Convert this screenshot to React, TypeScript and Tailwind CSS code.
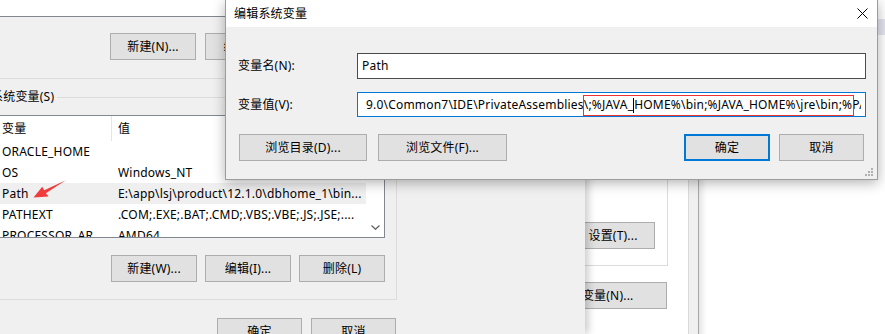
import React from 'react';

type BtnProps = { children: React.ReactNode; className?: string; primary?: boolean };

function Btn({ children, className = '', primary = false }: BtnProps) {
  return (
    <div
      className={`flex h-[27px] shrink-0 items-center justify-center bg-[#e1e1e1] text-[12px] text-black ${
        primary ? 'border-2 border-[#0078d7]' : 'border border-[#adadad]'
      } ${className}`}
    >
      {children}
    </div>
  );
}

const ROWS = [
  { name: 'ORACLE_HOME', value: '' },
  { name: 'OS', value: 'Windows_NT' },
  { name: 'Path', value: 'E:\\app\\lsj\\product\\12.1.0\\dbhome_1\\bin...', active: true },
  { name: 'PATHEXT', value: '.COM;.EXE;.BAT;.CMD;.VBS;.VBE;.JS;.JSE;....' },
  { name: 'PROCESSOR_AR...', value: 'AMD64' },
];

const VALUE = '9.0\\Common7\\IDE\\PrivateAssemblies\\;%JAVA_';
const VALUE_REST = 'HOME%\\bin;%JAVA_HOME%\\jre\\bin;%PATH%;C:\\Windows';

export default function App() {
  return (
    <div className="relative h-[334px] w-[885px] overflow-hidden bg-white font-['Noto_Sans','Noto_Sans_CJK_SC',sans-serif] text-[12px] tracking-[0.2px] text-black">
      {/* background window piece */}
      <div className="absolute right-0 top-[19px] h-[16px] w-[8px] bg-[#e4e4f0]" />

      {/* System properties window (behind) */}
      <div className="absolute left-[400px] top-[150px] flex h-[200px] w-[299px] border-r border-[#a8a8a8] bg-[#f0f0f0] pr-[9px] shadow-[3px_0_6px_rgba(0,0,0,0.12)]">
        <div className="flex flex-1 flex-col items-end border-r border-[#d9d9d9] bg-white pr-[20px]">
          <div className="flex h-[116px] w-[220px] items-end justify-end border-b border-r border-[#dcdcdc] pb-[16px] pr-[12px]">
            <Btn className="w-[84px]">设置(T)...</Btn>
          </div>
          <Btn className="mr-px mt-[16px] w-[143px]">环境变量(N)...</Btn>
        </div>
      </div>

      {/* Environment variables window */}
      <div className="absolute left-0 top-0 z-10 h-[334px] w-[585px] bg-[#f0f0f0] shadow-[3px_0_8px_rgba(0,0,0,0.22)]">
        <div className="flex w-[397px] flex-col">
          {/* user variables (bottom of group) */}
          <div className="h-[79px] border-b border-r border-[#dcdcdc]">
            <div className="h-[17px] w-[385px] border-b border-[#828790] bg-white" />
            <div className="mt-[16px] flex gap-[9px] pl-[110px]">
              <Btn className="w-[86px]">新建(N)...</Btn>
              <Btn className="w-[86px]">编辑(E)...</Btn>
              <Btn className="w-[86px]">删除(D)</Btn>
            </div>
          </div>

          {/* system variables group */}
          <fieldset className="-ml-[20px] mt-[10px] w-[417px] border border-[#dcdcdc] pb-[17px] pl-[10px] pr-[11px]">
            <legend className="pr-[3px] leading-[16px]">系统变量(S)</legend>
            <div className="ml-[5px] mt-[10px] h-[123px] w-[389px] overflow-hidden border border-[#828790] bg-white">
              <div className="flex h-[25px] items-center">
                <div className="flex h-full w-[115px] items-center border-r border-[#e5e5e5] pl-[5px]">变量</div>
                <div className="pl-[6px]">值</div>
              </div>
              <div className="flex">
                <div className="w-[370px]">
                  {ROWS.map((r) => (
                    <div
                      key={r.name}
                      className={`flex h-[21px] items-center whitespace-nowrap ${r.active ? 'bg-[#efefef]' : ''}`}
                    >
                      <div className="w-[115px] overflow-hidden pl-[5px]">{r.name}</div>
                      <div className="pl-[6px]">{r.value}</div>
                    </div>
                  ))}
                </div>
                <div className="flex h-[95px] w-[18px] items-end justify-center pb-[6px]">
                  <svg width="9" height="5" viewBox="0 0 9 5" fill="none" stroke="#606060" strokeWidth="1.2">
                    <path d="M0.5 0.5 L4.5 4.3 L8.5 0.5" />
                  </svg>
                </div>
              </div>
            </div>
            <div className="mt-[17px] flex justify-end gap-[8px]">
              <Btn className="w-[86px]">新建(W)...</Btn>
              <Btn className="w-[86px]">编辑(I)...</Btn>
              <Btn className="w-[86px]">删除(L)</Btn>
            </div>
          </fieldset>

          <div className="mt-[18px] flex justify-end gap-[9px] pr-px">
            <Btn className="w-[85px]">确定</Btn>
            <Btn className="w-[85px]">取消</Btn>
          </div>
        </div>

        {/* red arrow annotation */}
        <svg className="absolute left-[30px] top-[176px]" width="40" height="26" viewBox="30 176 40 26">
          <polygon
            points="65.8,180.2 44.3,190.3 42.2,186.8 33.5,197.4 48.6,196.4 45.9,193.3"
            fill="#f03c3c"
          />
        </svg>
      </div>

      {/* Edit system variable dialog */}
      <div className="absolute left-[225px] top-0 z-20 flex h-[180px] w-[653px] flex-col border border-t-0 border-[#9c9c9c] bg-[#f0f0f0] shadow-[0_3px_12px_rgba(0,0,0,0.3)]">
        <div className="flex h-[27px] items-center justify-between bg-white pl-[8px] pr-[9px]">
          <span>编辑系统变量</span>
          <svg width="11" height="11" viewBox="0 0 11 11" stroke="#000" strokeWidth="1">
            <path d="M0.5 0.5 L10.5 10.5 M10.5 0.5 L0.5 10.5" />
          </svg>
        </div>

        <div className="flex flex-col pl-[12px] pr-[11px] pt-[26px]">
          <div className="flex items-center">
            <span className="w-[119px] shrink-0 whitespace-nowrap">变量名(N):</span>
            <div className="flex h-[26px] min-w-0 flex-1 items-center border border-[#4b4b4b] bg-white pl-[4px]">Path</div>
          </div>
          <div className="mt-[13px] flex items-center">
            <span className="w-[119px] shrink-0 whitespace-nowrap">变量值(V):</span>
            <div className="relative flex h-[25px] min-w-0 flex-1 items-center border border-[#0078d7] bg-white pl-[8px]">
              <div className="mr-[4px] min-w-0 flex-1 overflow-hidden whitespace-nowrap">
                {VALUE}
                <span className="inline-block h-[15px] w-px bg-black align-middle" />
                {VALUE_REST}
              </div>
              <div className="absolute left-[225px] top-[2px] h-[21px] w-[271px] border border-[#ee3333]" />
            </div>
          </div>
          <div className="mt-[17px] flex items-center">
            <Btn className="ml-px w-[128px]">浏览目录(D)...</Btn>
            <Btn className="ml-[11px] w-[129px]">浏览文件(F)...</Btn>
            <Btn primary className="ml-auto w-[86px]">确定</Btn>
            <Btn className="ml-[9px] mr-[2px] w-[85px]">取消</Btn>
          </div>
        </div>

        {/* size grip */}
        <svg className="absolute bottom-[2px] right-[3px]" width="9" height="9" viewBox="0 0 9 9" fill="#b0b0b0">
          <rect x="6" y="0" width="2" height="2" />
          <rect x="3" y="3" width="2" height="2" />
          <rect x="6" y="3" width="2" height="2" />
          <rect x="0" y="6" width="2" height="2" />
          <rect x="3" y="6" width="2" height="2" />
          <rect x="6" y="6" width="2" height="2" />
        </svg>
      </div>
    </div>
  );
}
